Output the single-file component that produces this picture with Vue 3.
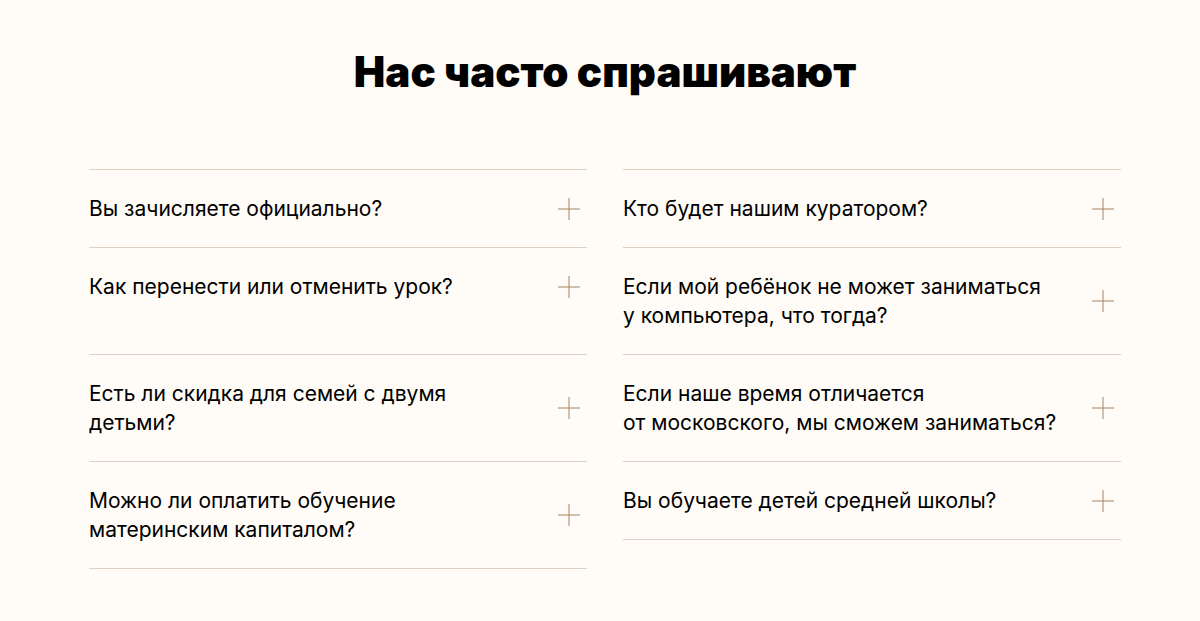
<script setup>
import { ref } from 'vue'

const items = [
  { lines: ['Вы зачисляете официально?'] },
  { lines: ['Кто будет нашим куратором?'] },
  { lines: ['Как перенести или отменить урок?'] },
  { lines: ['Если мой ребёнок не может заниматься', 'у компьютера, что тогда?'] },
  { lines: ['Есть ли скидка для семей с двумя', 'детьми?'] },
  { lines: ['Если наше время отличается', 'от московского, мы сможем заниматься?'] },
  { lines: ['Можно ли оплатить обучение', 'материнским капиталом?'] },
  { lines: ['Вы обучаете детей средней школы?'] },
]
const selected = ref(-1)
</script>

<template>
  <main class="faq">
    <h1 class="title">Нас часто спрашивают</h1>
    <div class="grid">
      <div v-for="(item, i) in items" :key="i" class="cell">
        <button
          class="question"
          type="button"
          :aria-pressed="selected === i"
          @click="selected = selected === i ? -1 : i"
        >
          <span class="text">
            <span v-for="line in item.lines" :key="line" class="line">{{ line }}</span>
          </span>
          <svg class="plus" viewBox="0 0 22 22" aria-hidden="true">
            <path d="M11 0V22M0 11H22" />
          </svg>
        </button>
      </div>
    </div>
  </main>
</template>

<style>
body {
  background: #fffbf6;
}
</style>

<style scoped>
.faq {
  box-sizing: border-box;
  padding: 48px 79px 53px 89px;
  font-family: Inter, "Noto Sans", sans-serif;
  color: #000;
}
.title {
  margin: 0 0 73px;
  font-size: 42px;
  line-height: 48px;
  font-weight: 900;
  text-align: center;
}
.grid {
  display: grid;
  grid-template-columns: 1fr 1fr;
  column-gap: 36px;
}
.cell {
  border-top: 1px solid #dfd2c3;
}
.cell:nth-last-child(-n + 2) {
  align-self: start;
  border-bottom: 1px solid #dfd2c3;
}
.question {
  display: flex;
  align-items: center;
  justify-content: space-between;
  box-sizing: border-box;
  width: 100%;
  padding: 24px 7px 24px 0;
  border: 0;
  background: none;
  color: inherit;
  font: inherit;
  font-size: 21px;
  line-height: 29px;
  text-align: left;
  cursor: pointer;
}
.line {
  display: block;
}
.plus {
  flex: none;
  width: 22px;
  height: 22px;
  fill: none;
  stroke: #a48462;
  stroke-width: 1;
}
</style>
